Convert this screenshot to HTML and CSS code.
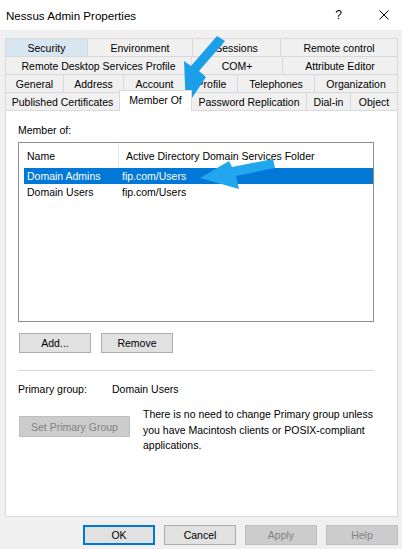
FILE: index.html
```html
<!DOCTYPE html>
<html>
<head>
<meta charset="utf-8">
<link rel="stylesheet" href="styles.css">
</head>
<body>
<div class="titlebar">
  <span class="title">Nessus Admin Properties</span>
  <span class="help-q">?</span>
  <svg class="close" viewBox="0 0 10 10"><path d="M0.5 0.5 L9.5 9.5 M9.5 0.5 L0.5 9.5" stroke="#000" stroke-width="1" fill="none"/></svg>
</div>
<div class="dialog">
  <div class="tabs">
    <div class="tabrow r1">
      <div class="tab hover">Security</div>
      <div class="tab">Environment</div>
      <div class="tab">Sessions</div>
      <div class="tab">Remote control</div>
    </div>
    <div class="tabrow r2">
      <div class="tab">Remote Desktop Services Profile</div>
      <div class="tab">COM+</div>
      <div class="tab">Attribute Editor</div>
    </div>
    <div class="tabrow r3">
      <div class="tab">General</div>
      <div class="tab">Address</div>
      <div class="tab">Account</div>
      <div class="tab">Profile</div>
      <div class="tab">Telephones</div>
      <div class="tab">Organization</div>
    </div>
    <div class="tabrow r4">
      <div class="tab">Published Certificates</div>
      <div class="tab active">Member Of</div>
      <div class="tab">Password Replication</div>
      <div class="tab">Dial-in</div>
      <div class="tab">Object</div>
    </div>
  </div>
  <div class="panel">
    <div class="label">Member of:</div>
    <div class="listview">
      <div class="lv-header">
        <div class="h1">Name</div>
        <div class="h2">Active Directory Domain Services Folder</div>
      </div>
      <div class="lv-row selected"><span class="c1">Domain Admins</span><span class="c2">fip.com/Users</span></div>
      <div class="lv-row"><span class="c1">Domain Users</span><span class="c2">fip.com/Users</span></div>
    </div>
    <div class="btnrow">
      <button class="btn">Add...</button>
      <button class="btn">Remove</button>
    </div>
    <hr class="sep">
    <div class="pg"><span class="pg-label">Primary group:</span><span>Domain Users</span></div>
    <div class="setpg">
      <button class="btn disabled wide">Set Primary Group</button>
      <p class="note">There is no need to change Primary group unless you have Macintosh clients or POSIX-compliant applications.</p>
    </div>
  </div>
  <div class="footer">
    <button class="btn default">OK</button>
    <button class="btn">Cancel</button>
    <button class="btn disabled">Apply</button>
    <button class="btn disabled">Help</button>
  </div>
</div>
<svg class="annot" viewBox="0 0 402 549">
  <polygon points="217,36 225,41 199,71 206,77 186,107 184,61 191,66" fill="#1a9fe8"/>
  <polygon points="200,178 229,161 232,167 273,159 275,168 236,176 239,189" fill="#22a6ee"/>
</svg>
</body>
</html>
```

FILE: styles.css
```css
* { box-sizing: border-box; }

body {
  margin: 0;
  width: 402px;
  height: 549px;
  background: #f0f0f0;
  font-family: "Liberation Sans", Arial, sans-serif;
  font-size: 10.5px;
  color: #000;
  overflow: hidden;
  position: relative;
}

.titlebar {
  height: 30px;
  background: #fff;
  display: flex;
  align-items: center;
  padding-left: 6px;
}
.title { flex: 1; font-size: 11.6px; }
.help-q { font-size: 12px; margin-right: 37px; }
.close { width: 10px; height: 10px; margin-right: 13px; }

.dialog { padding-top: 8px; }

.tabs { margin: 0 4px 0 5px; }
.tabrow { display: grid; height: 18px; }
.r1 { grid-template-columns: 83px 105px 88px 117px; }
.r2 { grid-template-columns: 187px 91px 115px; }
.r3 { grid-template-columns: 59px 60px 62px 52px 77px 83px; }
.r4 { grid-template-columns: 115px 72px 115px 44px 47px; }

.tab {
  display: flex;
  align-items: center;
  justify-content: center;
  white-space: nowrap;
  border-top: 1px solid #d9d9d9;
  border-right: 1px solid #d9d9d9;
}
.tab:first-child { border-left: 1px solid #d9d9d9; }
.tab.hover { background: #d8e6f2; }
.tab.active {
  position: relative;
  z-index: 1;
  background: #fff;
  margin: -2px 0 -1px -1px;
  border-left: 1px solid #d9d9d9;
  padding-bottom: 2px;
}

.panel {
  margin: 0 4px 0 5px;
  height: 407px;
  background: #fff;
  border: 1px solid #d9d9d9;
  padding: 12px 23px 0 12px;
}
.label { line-height: 14px; }

.listview {
  margin-top: 5px;
  height: 180px;
  border: 1px solid #8e8f8f;
  background: #fff;
}
.lv-header {
  display: grid;
  grid-template-columns: 100px 1fr;
  height: 25px;
}
.h1 {
  padding-left: 8px;
  border-right: 1px solid #e5e5e5;
  display: flex;
  align-items: center;
}
.h2 { padding-left: 7px; display: flex; align-items: center; }

.lv-row {
  display: grid;
  grid-template-columns: 98px 1fr;
  height: 16px;
  align-items: center;
  margin-left: 5px;
  white-space: nowrap;
}
.c1 { padding-left: 3px; }
.lv-row.selected { background: #0078d7; color: #fff; }

.btn {
  width: 72px;
  height: 20px;
  padding: 0;
  background: #e1e1e1;
  border: 1px solid #adadad;
  font: inherit;
  color: #000;
}
.btn.disabled { background: #cccccc; border-color: #bfbfbf; color: #838383; }
.btn.default { border: 1px solid #0078d7; box-shadow: inset 0 0 0 1px #0078d7; }

.btnrow { display: flex; gap: 10px; margin-top: 11px; padding-left: 1px; }

.sep {
  margin: 17px 0 0;
  border: 0;
  border-top: 1px solid #d7d7d7;
  height: 0;
}

.pg { display: flex; line-height: 14px; margin-top: 11px; }
.pg-label { width: 94px; }

.setpg { display: flex; align-items: flex-start; margin-top: 11px; }
.btn.wide { width: 111px; height: 21px; margin-top: 9px; margin-left: 1px; flex: none; }
.note { margin: 0 0 0 13px; line-height: 15.5px; width: 240px; }

.footer {
  display: flex;
  justify-content: flex-end;
  gap: 9px;
  padding-right: 4px;
  margin-top: 8px;
}

.annot {
  position: absolute;
  top: 0;
  left: 0;
  width: 402px;
  height: 549px;
  pointer-events: none;
}
```
